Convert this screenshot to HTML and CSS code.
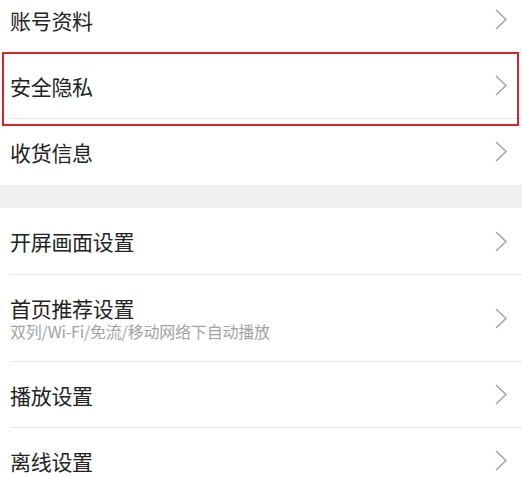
FILE: index.html
```html
<!DOCTYPE html>
<html lang="zh-CN">
<head>
<meta charset="utf-8">
<link rel="stylesheet" href="styles.css">
</head>
<body>
<div class="page">
  <div class="section first">
    <div class="row"><div class="inner"><span class="title">账号资料</span><svg class="chev" viewBox="0 0 12 21"><path d="M1 1 L11 10.5 L1 20" /></svg></div></div>
    <div class="row highlighted"><div class="inner"><span class="title">安全隐私</span><svg class="chev" viewBox="0 0 12 21"><path d="M1 1 L11 10.5 L1 20" /></svg></div><div class="mark"></div></div>
    <div class="row"><div class="inner"><span class="title">收货信息</span><svg class="chev" viewBox="0 0 12 21"><path d="M1 1 L11 10.5 L1 20" /></svg></div></div>
  </div>
  <div class="gap"></div>
  <div class="section">
    <div class="row tall1"><div class="inner"><span class="title">开屏画面设置</span><svg class="chev" viewBox="0 0 12 21"><path d="M1 1 L11 10.5 L1 20" /></svg></div></div>
    <div class="row two"><div class="inner"><div class="texts"><span class="title">首页推荐设置</span><span class="sub">双列/Wi-Fi/免流/移动网络下自动播放</span></div><svg class="chev" viewBox="0 0 12 21"><path d="M1 1 L11 10.5 L1 20" /></svg></div></div>
    <div class="row"><div class="inner"><span class="title">播放设置</span><svg class="chev" viewBox="0 0 12 21"><path d="M1 1 L11 10.5 L1 20" /></svg></div></div>
    <div class="row"><div class="inner"><span class="title">离线设置</span><svg class="chev" viewBox="0 0 12 21"><path d="M1 1 L11 10.5 L1 20" /></svg></div></div>
  </div>
</div>
</body>
</html>
```

FILE: styles.css
```css
html, body {
  margin: 0;
  padding: 0;
  background: #ffffff;
  overflow: hidden;
}
body {
  width: 522px;
  height: 477px;
  font-family: "Noto Sans CJK SC", "Noto Sans", sans-serif;
  color: #222222;
}
.page {
  display: flex;
  flex-direction: column;
}
.section.first {
  margin-top: -13px;
}
.row {
  position: relative;
  padding-left: 10px;
}
.inner {
  display: flex;
  align-items: center;
  justify-content: space-between;
  height: 66px;
  box-sizing: border-box;
  border-bottom: 1px solid #e8e8ea;
  padding-right: 15px;
}
.section .row:last-child .inner {
  border-bottom-color: transparent;
}
.row.tall1 .inner {
  height: 67px;
}
.row.two .inner {
  height: 87px;
}
.title {
  font-size: 21px;
  line-height: 28px;
  letter-spacing: -0.3px;
}
.texts {
  display: flex;
  flex-direction: column;
}
.texts .title {
  line-height: 26px;
}
.sub {
  font-size: 16px;
  line-height: 20px;
  color: #a3a3a3;
  letter-spacing: -0.2px;
}
.chev {
  width: 12px;
  height: 21px;
  fill: none;
  stroke: #a0a0a0;
  stroke-width: 1.4;
}
.gap {
  height: 23px;
  background: #f0f0f2;
}
.mark {
  position: absolute;
  left: 2px;
  top: -1px;
  width: 517px;
  height: 74px;
  box-sizing: border-box;
  border: 2px solid #d8232a;
  pointer-events: none;
}
```
